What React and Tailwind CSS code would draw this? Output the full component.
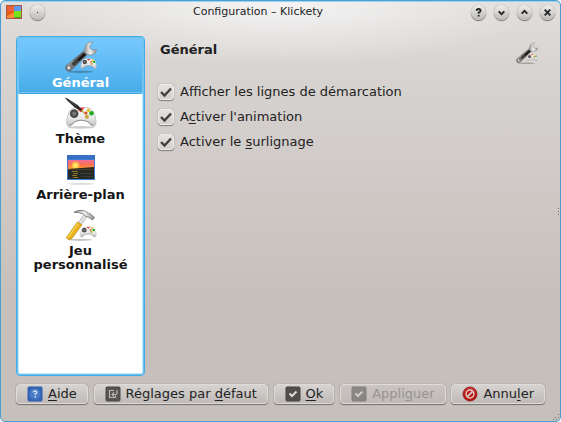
import React from "react";

function Gamepad({ x = 0, y = 0, scale = 1 }) {
  return (
    <g transform={`translate(${x} ${y}) scale(${scale})`}>
      <path d="M6 1.5 Q9 0 15 0.5 Q21 0 24 1.5 Q27 3 29 11 Q30.5 18 27 19 Q25 19.5 21.5 14.5 Q15 11.5 8.5 14.5 Q5 19.5 3 19 Q-0.5 18 1 11 Q3 3 6 1.5Z" fill="url(#pad)" stroke="#b4b4b4" strokeWidth="0.7" />
      <path d="M3.5 18 Q6 17 8.5 14.5 Q15 11.5 21.5 14.5 Q24 17 26.5 18" fill="none" stroke="#8f8f8f" strokeWidth="0.9" />
      <circle cx="8" cy="6.5" r="4.2" fill="#4a4a4a" />
      <circle cx="8" cy="6.5" r="2" fill="#777" />
      <path d="M11.5 0.8 H18.5 L15 4Z" fill="#e8322c" />
      <circle cx="22" cy="3.2" r="1.7" fill="#e4bd28" />
      <circle cx="25" cy="6.2" r="2.2" fill="#1fae1f" />
      <circle cx="19.5" cy="6" r="1.6" fill="#d64a30" />
      <circle cx="20.5" cy="9.5" r="2" fill="#c9a53a" />
    </g>
  );
}

function Defs() {
  return (
    <defs>
      <linearGradient id="pad" x1="0" y1="0" x2="0" y2="1">
        <stop offset="0" stopColor="#ffffff" />
        <stop offset="0.6" stopColor="#e6e6e6" />
        <stop offset="1" stopColor="#bdbdbd" />
      </linearGradient>
      <linearGradient id="steel" x1="0" y1="0" x2="1" y2="0">
        <stop offset="0" stopColor="#8a8a8a" />
        <stop offset="0.5" stopColor="#f2f2f2" />
        <stop offset="1" stopColor="#8d8d8d" />
      </linearGradient>
      <linearGradient id="sunset" x1="0" y1="0" x2="0" y2="1">
        <stop offset="0" stopColor="#ee6f9c" />
        <stop offset="0.5" stopColor="#fb6f54" />
        <stop offset="1" stopColor="#fba02a" />
      </linearGradient>
      <radialGradient id="sun">
        <stop offset="0" stopColor="#fff27a" />
        <stop offset="0.5" stopColor="#ffd24a" />
        <stop offset="1" stopColor="#ffb03a" stopOpacity="0" />
      </radialGradient>
    </defs>
  );
}

function WrenchIcon({ className = "h-8 w-8" }) {
  return (
    <svg viewBox="0 0 32 32" className={className} aria-hidden="true">
      <Defs />
      <ellipse cx="15" cy="30.8" rx="13" ry="1.1" fill="#000" opacity="0.25" />
      <path d="M19 10 L22.5 13.5 L6.5 28.8 Q3.6 31 1.4 29 Q-0.4 26.6 1.8 24.2Z" fill="#7b7b7b" stroke="#5a5a5a" strokeWidth="0.7" />
      <path d="M18.5 11.5 L21 14 L9 25.2 L6.4 22.4Z" fill="#3d3d3d" />
      <path d="M19.5 12 L21 13.6 L14 20 L12.6 18.4Z" fill="#151515" />
      <path d="M2.2 25 L8 20" stroke="#b5b5b5" strokeWidth="1" />
      <circle cx="3.8" cy="27" r="1.4" fill="#e4e4e4" />
      <path d="M27.5 1 L25.5 3.5 Q24.2 6 25.5 8 Q27.5 10 31.5 8.6 Q31 13 27 13.8 Q24.5 14.2 22.5 13.5 L19 10.5 Q19.6 8.6 20 6 Q21 1.4 27.5 1Z" fill="url(#steel)" stroke="#8c8c8c" strokeWidth="0.7" />
      <Gamepad x={15.5} y={17.5} scale={0.54} />
    </svg>
  );
}

function ThemeIcon() {
  return (
    <svg viewBox="0 0 32 32" className="h-8 w-8" aria-hidden="true">
      <ellipse cx="16" cy="30.4" rx="13" ry="1.3" fill="#000" opacity="0.2" />
      <Gamepad x={1} y={10} scale={1.02} />
      <path d="M0 0.8 Q1.5 0.6 4 2.5 L13 8.2 L17.5 13.4 L16 14.6 L9.5 10.2 L2.2 3.6Z" fill="#292929" />
      <path d="M4 3.4 L12 9.2" stroke="#6a6a6a" strokeWidth="0.7" />
      <path d="M13.4 12.8 L16.4 14.8" stroke="#d3362c" strokeWidth="1.2" />
      <path d="M16.5 13.5 L20 16.4" stroke="#c9a23a" strokeWidth="1.4" />
    </svg>
  );
}

function WallpaperIcon() {
  return (
    <svg viewBox="0 0 32 32" className="h-8 w-8" aria-hidden="true">
      <ellipse cx="16" cy="30.8" rx="14" ry="0.9" fill="#000" opacity="0.16" />
      <rect x="2" y="2" width="28" height="25" fill="#3f7bd0" />
      <rect x="2" y="2" width="28" height="4" fill="#3570c4" />
      <rect x="3" y="7" width="26" height="9" fill="url(#sunset)" />
      <circle cx="10.5" cy="12.5" r="5" fill="url(#sun)" />
      <path d="M3 16 L16 15 L29 14 V26 H3Z" fill="#272925" />
      <path d="M3 16.5 H29" stroke="#4c3a25" strokeWidth="1" />
      <path d="M7 18.5 H13 M8 20.5 H13 M7 22.5 H12 M8 24.5 H13" stroke="#8a7424" strokeWidth="1.2" />
      <path d="M15 20.5 H27 M16 23.5 H28" stroke="#383c37" strokeWidth="1" />
    </svg>
  );
}

function HammerIcon() {
  return (
    <svg viewBox="0 0 32 32" className="h-8 w-8" aria-hidden="true">
      <ellipse cx="15" cy="30.8" rx="12" ry="1.1" fill="#000" opacity="0.22" />
      <path d="M19.5 5 L22.5 7 L16 16 L13 14Z" fill="#e2e2e2" stroke="#9a9a9a" strokeWidth="0.6" />
      <path d="M9 3.4 Q12 0.8 17 1.4 Q20.5 1.6 23 4 L25.5 5 L29.5 8.4 L27.6 11 L23.4 8.2 Q20 7.6 18.4 5.2 Q14 2.8 9 3.4Z" fill="url(#steel)" stroke="#666" strokeWidth="0.7" />
      <path d="M12.4 13 L17 15.8 L6.4 30 Q3.4 31.6 1.2 28.8Z" fill="#e9b31c" stroke="#b88708" strokeWidth="0.7" />
      <path d="M13 14.4 L3 28.4" stroke="#fbd75c" strokeWidth="1.3" />
      <Gamepad x={14.8} y={17.5} scale={0.56} />
    </svg>
  );
}

const titleButtons = [
  { label: "Aide contextuelle", shape: "M6 6 Q6 4.2 8 4.2 Q10.2 4.2 10.2 6 Q10.2 7.2 8.2 8 V9.4 M8.2 10.6 V12.2" },
  { label: "Réduire", shape: "M5 6.8 L8 9.8 L11 6.8" },
  { label: "Agrandir", shape: "M5 9.2 L8 6.2 L11 9.2" },
  { label: "Fermer", shape: "M5 5 L11 11 M11 5 L5 11" },
];

const roundButton = "grid h-[15px] w-[15px] shrink-0 place-items-center rounded-full bg-linear-to-b from-[#eeeeec] to-[#bdbab8] shadow-[0_1px_1px_#77716e,0_0_1px_#77716e]";

function TitleBar() {
  return (
    <header className="flex h-[22px] items-center gap-2 px-[5px]">
      <svg viewBox="0 0 16 14" className="h-[14px] w-4 shrink-0" aria-hidden="true">
        <rect width="16" height="14" fill="#a9583c" />
        <rect x="1" y="1" width="7" height="5" fill="#e8623c" />
        <rect x="8" y="1" width="7" height="5" fill="#5d9af5" />
        <rect x="1" y="6" width="7" height="7" fill="#ea5614" />
        <path d="M1 13 V11 L8 7 V13Z" fill="#fb8a3a" />
        <rect x="8" y="6" width="7" height="6" fill="#77e31b" />
        <rect x="8" y="12" width="7" height="1" fill="#4f9a2c" />
      </svg>
      <button aria-label="Menu de la fenêtre" className={roundButton}>
        <span className="h-px w-px bg-[#444]" />
      </button>
      <h1 className="flex-1 text-center text-[11px] leading-4 text-[#222]">Configuration – Klickety</h1>
      {titleButtons.map((b) => (
        <button key={b.label} aria-label={b.label} className={roundButton}>
          <svg viewBox="0 0 16 16" className="h-[15px] w-[15px]" fill="none" stroke="#252525" strokeWidth="2" aria-hidden="true">
            <path d={b.shape} />
          </svg>
        </button>
      ))}
    </header>
  );
}

const pages = [
  { name: "Général", Icon: WrenchIcon, active: true },
  { name: "Thème", Icon: ThemeIcon },
  { name: "Arrière-plan", Icon: WallpaperIcon },
  { name: "Jeu personnalisé", Icon: HammerIcon },
];

function Sidebar() {
  return (
    <nav className="w-[129px] shrink-0 rounded-[4px] border border-[#43ace8] bg-white p-px shadow-[inset_0_0_0_1px_#6fc1ee,inset_0_0_0_2px_#c4e7f9]">
      {pages.map(({ name, Icon, active }) => (
        <button
          key={name}
          className={
            "flex min-h-14 w-full flex-col items-center px-3 pt-[3px] text-[13px] leading-[14px] font-bold " +
            (active
              ? "rounded-xs border-b border-[#3ca7e4] bg-linear-to-b from-[#76c9ff] to-[#46ace8] text-white shadow-[inset_0_0_0_1px_#75c5f3]"
              : "text-[#151515]")
          }
        >
          <Icon />
          <span className="pt-[3px]">{name}</span>
        </button>
      ))}
    </nav>
  );
}

function Option({ id, children }) {
  return (
    <div className="flex h-[25px] items-center gap-[6px]">
      <span className="grid h-4 w-4">
        <input
          id={id}
          type="checkbox"
          defaultChecked
          className="peer col-start-1 row-start-1 h-4 w-4 appearance-none rounded-[4px] border border-[#f0efee] bg-linear-to-b from-[#e4e2e0] to-[#d3d0ce] shadow-[0_1px_1px_#817b78,0_0_1px_#817b78]"
        />
        <svg viewBox="0 0 16 16" className="pointer-events-none invisible col-start-1 row-start-1 h-4 w-4 peer-checked:visible" aria-hidden="true">
          <path d="M3 8 L6.5 11.5 L13 4.5" fill="none" stroke="#414141" strokeWidth="2.4" />
        </svg>
      </span>
      <label htmlFor={id} className="text-[13px] leading-4">{children}</label>
    </div>
  );
}

function Key({ children }) {
  return <span className="underline decoration-1 underline-offset-2">{children}</span>;
}

function DialogButton({ icon, disabled, children }) {
  return (
    <button
      disabled={disabled}
      className="flex h-5 items-center gap-[5px] rounded-[4px] border border-[#dedbd9] bg-linear-to-b from-[#d6d3d0] to-[#bfbab7] px-[10px] text-[13px] leading-4 whitespace-nowrap text-[#222] shadow-[0_1px_1px_#736d6a,0_0_1px_#736d6a] disabled:from-[#cac5c2] disabled:to-[#bfbab7] disabled:text-[#979390]"
    >
      {icon}
      <span>{children}</span>
    </button>
  );
}

function HelpIcon() {
  return (
    <svg viewBox="0 0 16 16" className="h-4 w-4" aria-hidden="true">
      <rect x="1" y="1" width="14" height="14" rx="1" fill="#3566b5" stroke="#2f5dab" />
      <circle cx="8" cy="8" r="5.5" fill="#4779c7" />
      <path d="M6.3 6.4 Q6.3 5 8 5 Q9.8 5 9.8 6.4 Q9.8 7.3 8.2 8 V9 M8.2 10 V11.4" fill="none" stroke="#d5e2f6" strokeWidth="1.5" />
    </svg>
  );
}

function ResetIcon() {
  return (
    <svg viewBox="0 0 16 16" className="h-4 w-4" aria-hidden="true">
      <rect x="1" y="1" width="14" height="14" rx="1" fill="#555452" stroke="#4a4947" />
      <path d="M9 4.5 H4.5 V11.5 H10.5 V9.5 M12 4 V7 Q12 8.5 10.5 8.5 H7.5 M9 6.5 L7 8.5 L9 10.5" fill="none" stroke="#b9b7b5" strokeWidth="1.2" />
    </svg>
  );
}

function TickIcon({ faded }) {
  return (
    <svg viewBox="0 0 16 16" className={faded ? "h-4 w-4 opacity-50" : "h-4 w-4"} aria-hidden="true">
      <rect x="1" y="1" width="14" height="14" rx="1" fill="#504f4e" stroke="#464544" />
      <path d="M4.5 7.5 L7 10 L11.5 5.5" fill="none" stroke="#dddbd9" strokeWidth="2" />
    </svg>
  );
}

function CancelIcon() {
  return (
    <svg viewBox="0 0 16 16" className="h-4 w-4" aria-hidden="true">
      <circle cx="8" cy="8" r="7" fill="#bb1614" stroke="#8b1513" strokeWidth="0.8" />
      <path d="M2.5 6 Q4 2 8 2 Q12 2 13.5 6" fill="none" stroke="#d4443c" strokeWidth="1" />
      <circle cx="8" cy="8" r="3.9" fill="none" stroke="#dccfca" strokeWidth="1.5" />
      <path d="M5.4 10.6 L10.6 5.4" stroke="#dccfca" strokeWidth="1.6" />
    </svg>
  );
}

export default function App() {
  return (
    <div className="min-h-screen bg-white">
      <main className="relative flex min-h-screen flex-col overflow-hidden rounded-[5px] border border-[#4c9fd2] bg-[#c6c0bc] bg-[radial-gradient(ellipse_260px_65px_at_50%_0px,#f4f4f4_0%,#f4f4f400_100%),linear-gradient(to_bottom,#e1dfdd_0px,#d8d4d1_64px,#c6c0bc_300px)] font-['DejaVu_Sans',sans-serif] text-[#222] shadow-[inset_0_1px_0_#9bd3f1]">
        <TitleBar />
        <div className="flex flex-1 gap-[13px] px-[15px] pt-[13px]">
          <Sidebar />
          <section className="min-w-0 flex-1">
            <div className="flex h-[43px] items-start justify-between pr-[7px] pl-[2px]">
              <h2 className="pt-[6px] text-[13px] leading-4 font-bold">Général</h2>
              <WrenchIcon className="mt-[6px] h-[22px] w-[22px]" />
            </div>
            <Option id="lines">Afficher les lignes de démarcation</Option>
            <Option id="animation">A<Key>c</Key>tiver l'animation</Option>
            <Option id="highlight">Activer le <Key>s</Key>urlignage</Option>
          </section>
        </div>
        <footer className="flex justify-between px-[15px] pt-2 pb-[17px]">
          <DialogButton icon={<HelpIcon />}><Key>A</Key>ide</DialogButton>
          <DialogButton icon={<ResetIcon />}>Réglages par <Key>d</Key>éfaut</DialogButton>
          <DialogButton icon={<TickIcon />}><Key>O</Key>k</DialogButton>
          <DialogButton icon={<TickIcon faded />} disabled>Appli<Key>q</Key>uer</DialogButton>
          <DialogButton icon={<CancelIcon />}>Annu<Key>l</Key>er</DialogButton>
        </footer>
        <svg viewBox="0 0 3 9" className="absolute top-[49%] right-0 h-[9px] w-[3px]" fill="#77716e" aria-hidden="true">
          <path d="M1 1h1v1H1z M1 4h1v1H1z M1 7h1v1H1z" />
        </svg>
        <svg viewBox="0 0 7 7" className="absolute right-0 bottom-0 h-[7px] w-[7px]" fill="#77716e" aria-hidden="true">
          <path d="M5 0h1v1H5z M2 3h1v1H2z M5 3h1v1H5z M0 5h1v1H0z M3 5h1v1H3z" />
        </svg>
      </main>
    </div>
  );
}
